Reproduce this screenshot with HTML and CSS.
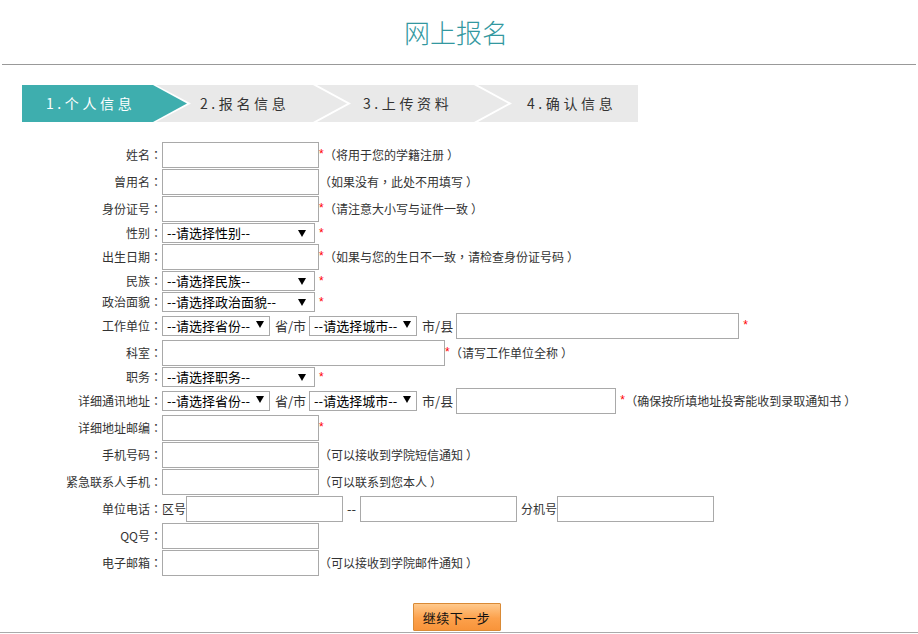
FILE: index.html
```html
<!DOCTYPE html>
<html lang="zh-CN">
<head>
<meta charset="utf-8">
<title>网上报名</title>
<link rel="stylesheet" href="styles.css">
</head>
<body>
<div class="header"><h1 class="title">网上报名</h1></div>
<div class="rule"></div>

<div class="steps">
  <div class="step step-active">1.个人信息</div>
  <div class="step step-mid">2.报名信息</div>
  <div class="step step-mid step-3">3.上传资料</div>
  <div class="step step-last">4.确认信息</div>
</div>

<form class="form">
  <div class="row">
    <label class="lbl">姓名<span class="p" lang="zh-TW">：</span></label>
    <input class="ipt" type="text"><span class="req">*</span><span class="hint"><span class="p po" lang="zh-TW">（</span>将用于您的学籍注册<span class="p pc" lang="zh-TW">）</span></span>
  </div>
  <div class="row">
    <label class="lbl">曾用名<span class="p" lang="zh-TW">：</span></label>
    <input class="ipt" type="text"><span class="hint nostar"><span class="p po" lang="zh-TW">（</span>如果没有<span class="p" lang="zh-TW">，</span>此处不用填写<span class="p pc" lang="zh-TW">）</span></span>
  </div>
  <div class="row">
    <label class="lbl">身份证号<span class="p" lang="zh-TW">：</span></label>
    <input class="ipt" type="text"><span class="req">*</span><span class="hint"><span class="p po" lang="zh-TW">（</span>请注意大小写与证件一致<span class="p pc" lang="zh-TW">）</span></span>
  </div>
  <div class="row row-sel">
    <label class="lbl">性别<span class="p" lang="zh-TW">：</span></label>
    <span class="sel sel-w"><select><option>--请选择性别--</option></select></span><span class="req gap">*</span>
  </div>
  <div class="row">
    <label class="lbl">出生日期<span class="p" lang="zh-TW">：</span></label>
    <input class="ipt" type="text"><span class="req">*</span><span class="hint"><span class="p po" lang="zh-TW">（</span>如果与您的生日不一致<span class="p" lang="zh-TW">，</span>请检查身份证号码<span class="p pc" lang="zh-TW">）</span></span>
  </div>
  <div class="row row-sel">
    <label class="lbl">民族<span class="p" lang="zh-TW">：</span></label>
    <span class="sel sel-w"><select><option>--请选择民族--</option></select></span><span class="req gap">*</span>
  </div>
  <div class="row row-sel">
    <label class="lbl">政治面貌<span class="p" lang="zh-TW">：</span></label>
    <span class="sel sel-w"><select><option>--请选择政治面貌--</option></select></span><span class="req gap">*</span>
  </div>
  <div class="row">
    <label class="lbl">工作单位<span class="p" lang="zh-TW">：</span></label>
    <span class="sel sel-s"><select><option>--请选择省份--</option></select></span><span class="txt">省/市</span><span class="sel sel-s"><select><option>--请选择城市--</option></select></span><span class="txt">市/县</span><input class="ipt ipt-l" type="text"><span class="req gap">*</span>
  </div>
  <div class="row">
    <label class="lbl">科室<span class="p" lang="zh-TW">：</span></label>
    <input class="ipt ipt-xl" type="text"><span class="req">*</span><span class="hint"><span class="p po" lang="zh-TW">（</span>请写工作单位全称<span class="p pc" lang="zh-TW">）</span></span>
  </div>
  <div class="row row-sel">
    <label class="lbl">职务<span class="p" lang="zh-TW">：</span></label>
    <span class="sel sel-w"><select><option>--请选择职务--</option></select></span><span class="req gap">*</span>
  </div>
  <div class="row">
    <label class="lbl">详细通讯地址<span class="p" lang="zh-TW">：</span></label>
    <span class="sel sel-s"><select><option>--请选择省份--</option></select></span><span class="txt">省/市</span><span class="sel sel-s"><select><option>--请选择城市--</option></select></span><span class="txt">市/县</span><input class="ipt ipt-m" type="text"><span class="req gap">*</span><span class="hint"><span class="p po" lang="zh-TW">（</span>确保按所填地址投寄能收到录取通知书<span class="p pc" lang="zh-TW">）</span></span>
  </div>
  <div class="row">
    <label class="lbl">详细地址邮编<span class="p" lang="zh-TW">：</span></label>
    <input class="ipt" type="text"><span class="req">*</span>
  </div>
  <div class="row">
    <label class="lbl">手机号码<span class="p" lang="zh-TW">：</span></label>
    <input class="ipt" type="text"><span class="hint nostar"><span class="p po" lang="zh-TW">（</span>可以接收到学院短信通知<span class="p pc" lang="zh-TW">）</span></span>
  </div>
  <div class="row">
    <label class="lbl">紧急联系人手机<span class="p" lang="zh-TW">：</span></label>
    <input class="ipt" type="text"><span class="hint nostar"><span class="p po" lang="zh-TW">（</span>可以联系到您本人<span class="p pc" lang="zh-TW">）</span></span>
  </div>
  <div class="row">
    <label class="lbl">单位电话<span class="p" lang="zh-TW">：</span></label>
    <span class="txt-tight">区号</span><input class="ipt" type="text"><span class="txt dash">--</span><input class="ipt" type="text"><span class="txt ext">分机号</span><input class="ipt" type="text">
  </div>
  <div class="row">
    <label class="lbl">QQ号<span class="p" lang="zh-TW">：</span></label>
    <input class="ipt" type="text">
  </div>
  <div class="row">
    <label class="lbl">电子邮箱<span class="p" lang="zh-TW">：</span></label>
    <input class="ipt" type="text"><span class="hint nostar"><span class="p po" lang="zh-TW">（</span>可以接收到学院邮件通知<span class="p pc" lang="zh-TW">）</span></span>
  </div>

  <div class="actions">
    <button class="btn" type="button">继续下一步</button>
  </div>
</form>
<div class="footer-rule"></div>
</body>
</html>
```

FILE: styles.css
```css
html, body {
  margin: 0;
  padding: 0;
  background: #fff;
}
body {
  font-family: "Noto Sans CJK SC", "Liberation Sans", sans-serif;
  color: #333;
  font-size: 12px;
}

.header {
  height: 64px;
  display: flex;
  align-items: center;
  justify-content: center;
}
.title {
  margin: 0;
  font-size: 26px;
  font-weight: 300;
  line-height: 30px;
  color: #3398a0;
  padding-right: 6px;
  letter-spacing: 0;
}
.rule {
  height: 0;
  border-top: 1px solid #999;
  margin: 0 2px;
}

/* Steps bar */
.steps {
  display: flex;
  width: 616px;
  height: 37px;
  margin: 20px 0 0 22px;
  background: #e9e9e9;
  position: relative;
  overflow: hidden;
}
.step {
  position: relative;
  z-index: 0;
  box-sizing: border-box;
  height: 37px;
  line-height: 37px;
  padding-left: 24px;
  font-size: 14px;
  letter-spacing: 3.6px;
  color: #333;
  white-space: nowrap;
}
.step-active { width: 154px; color: #fff; }
.step-mid { width: 163px; }
.step-3 { width: 164px; }
.step-last { flex: 1; }

.step-active::before,
.step-active::after,
.step-mid::after {
  content: "";
  position: absolute;
  top: 0;
  height: 37px;
  z-index: -1;
}
.step-active::before {
  left: 0;
  width: 169px;
  background: #fff;
  clip-path: polygon(0 0, 134px 0, 169px 50%, 134px 100%, 0 100%);
}
.step-active::after {
  left: 0;
  width: 165px;
  background: #3eaeae;
  clip-path: polygon(0 0, 131px 0, 165px 50%, 131px 100%, 0 100%);
}
.step-mid::after {
  left: 137px;
  width: 38px;
  background: #fff;
  clip-path: polygon(0 0, 4px 0, 38px 50%, 4px 100%, 0 100%, 34px 50%);
}
.step-3::after { left: 135px; }

/* Form */
.form {
  margin-top: 20px;
}
.row {
  display: flex;
  align-items: center;
  height: 26px;
  margin-bottom: 1px;
  white-space: nowrap;
}
.row-sel {
  height: 20px;
}
.lbl {
  width: 162px;
  flex: none;
  text-align: right;
  font-size: 12px;
  line-height: 16px;
  color: #333;
}
.ipt {
  flex: none;
  box-sizing: border-box;
  width: 157px;
  height: 26px;
  margin: 0;
  padding: 0 3px;
  border: 1px solid #a9a9a9;
  border-radius: 0;
  background: #fff;
  font-family: inherit;
  font-size: 13px;
  outline: none;
}
.ipt-xl, .ipt-l { width: 283px; }
.ipt-m { width: 160px; }

.req {
  color: #f00;
  font-family: "Liberation Sans", sans-serif;
  font-size: 12px;
  line-height: 12px;
  align-self: flex-start;
  margin-top: 6px;
  width: 5px;
}
.row-sel .req { margin-top: 4px; }
.req.gap { margin-left: 4px; }

.hint {
  font-size: 12px;
  line-height: 16px;
  color: #333;
}
.nostar { margin-left: 0; }
.pc { margin-left: 3px; }

.sel {
  position: relative;
  flex: none;
  display: block;
  height: 20px;
}
.sel select {
  appearance: none;
  -webkit-appearance: none;
  box-sizing: border-box;
  width: 100%;
  height: 20px;
  margin: 0;
  padding: 0 0 0 4px;
  border: 1px solid #a9a9a9;
  border-radius: 0;
  background: #fff;
  font-family: inherit;
  font-size: 13px;
  line-height: 18px;
  color: #000;
  outline: none;
}
.sel::after {
  content: "";
  position: absolute;
  top: 7px;
  right: 9px;
  border-left: 4px solid transparent;
  border-right: 4px solid transparent;
  border-top: 7px solid #000;
  pointer-events: none;
}
.sel-w { width: 153px; }
.sel-s { width: 108px; }
.sel-s::after { right: 6px; top: 5px; }

.txt {
  font-size: 13px;
  line-height: 16px;
  color: #333;
  margin: 0 3px 0 5px;
}
.txt-tight {
  font-size: 12px;
  line-height: 16px;
  color: #333;
}
.dash { margin: 0 4px 0 4px; width: 9px; }
.ext { margin: 0 0 0 4px; font-size: 12px; }

.actions {
  display: flex;
  justify-content: center;
  padding-top: 26px;
  padding-right: 5px;
}
.btn {
  box-sizing: border-box;
  width: 88px;
  height: 28px;
  margin: 0;
  padding: 0;
  border: 1px solid #d98a36;
  border-radius: 1px;
  background: linear-gradient(#ffc98c, #fca14c 55%, #f8943a);
  font-family: inherit;
  font-size: 13px;
  letter-spacing: 0.5px;
  color: #111;
  cursor: pointer;
}
.footer-rule {
  margin-top: 1px;
  border-top: 1px solid #aaa;
}
```
